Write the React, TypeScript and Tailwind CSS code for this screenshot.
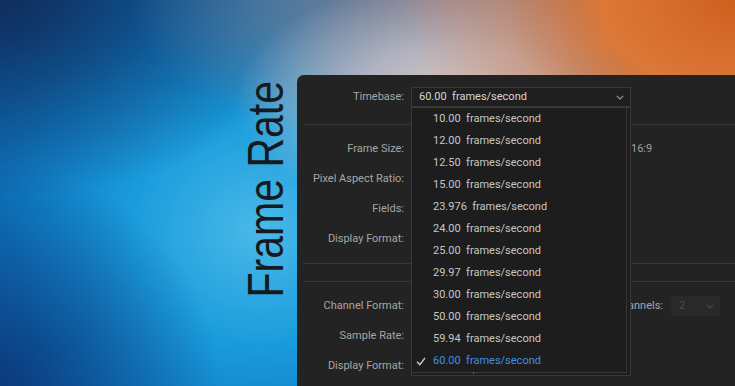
import React from "react";

const rates = [
  "10.00",
  "12.00",
  "12.50",
  "15.00",
  "23.976",
  "24.00",
  "25.00",
  "29.97",
  "30.00",
  "50.00",
  "59.94",
  "60.00",
];

function Chevron({ color = "#9a9a9a" }: { color?: string }) {
  return (
    <svg width="8" height="5" viewBox="0 0 8 5" fill="none">
      <path d="M0.8 0.8 L4 4 L7.2 0.8" stroke={color} strokeWidth="1.1" />
    </svg>
  );
}

function Row({ label, children, h = "h-[30px]" }: { label: string; children?: React.ReactNode; h?: string }) {
  return (
    <div className={`flex items-center ${h}`}>
      <div className="w-[107px] text-right text-[#a6a6a6] whitespace-nowrap">{label}</div>
      <div className="ml-[7px] flex items-center">{children}</div>
    </div>
  );
}

function Divider() {
  return <div className="ml-[6px] h-px bg-[#383838]" />;
}

export default function App() {
  return (
    <div className="relative flex w-[735px] h-[386px] overflow-hidden bg-[#0f3a74] bg-[image:radial-gradient(ellipse_330px_230px_at_100%_0%,#cf601f_0%,#dc7838_40%,rgba(222,140,95,0.5)_70%,rgba(222,150,120,0)_100%),radial-gradient(ellipse_220px_120px_at_455px_100px,#dccac2_0%,rgba(200,192,200,0.8)_45%,rgba(180,180,195,0)_100%),radial-gradient(ellipse_320px_150px_at_450px_0px,rgba(145,128,134,0.95)_0%,rgba(140,128,136,0.5)_55%,rgba(140,128,136,0)_100%),radial-gradient(ellipse_320px_200px_at_0px_0px,rgba(16,44,90,0.95)_0%,rgba(16,44,90,0.4)_55%,rgba(16,44,90,0)_100%),radial-gradient(ellipse_220px_220px_at_0px_100%,rgba(12,54,120,0.9)_0%,rgba(12,54,120,0)_100%),radial-gradient(ellipse_430px_380px_at_260px_230px,#4ab9e8_0%,#1a9cdc_30%,#0f7cc4_55%,#0c5aa2_80%,#10305e_100%)]">
      <div className="w-[297px] shrink-0 flex justify-end items-start pt-[81px] pr-[10px]">
        <div className="[writing-mode:vertical-rl] rotate-180 scale-x-[1.2] font-['Liberation_Sans',Arial,sans-serif] text-[41px] leading-none text-[#16191d] whitespace-nowrap">
          Frame Rate
        </div>
      </div>

      <div className="relative flex-1 mt-[75px] rounded-tl-[7px] bg-[#232323] font-['Roboto',sans-serif] text-[11px]">
        <div className="pt-[12px]">
          <Row label="Timebase:" h="h-[20px]">
            <div className="w-[220px] h-[20px] border border-[#383838] bg-[#1f1f1f] flex items-center justify-between pl-[7px] pr-[6px]">
              <span className="text-[#d6d6d6] whitespace-pre">60.00  frames/second</span>
              <Chevron />
            </div>
          </Row>
        </div>
        <div className="mt-[17px]">
          <Divider />
        </div>
        <div className="pt-[9px] pb-[9px]">
          <Row label="Frame Size:">
            <div className="w-[220px]" />
            <span className="text-[#a0a0a0]">16:9</span>
          </Row>
          <Row label="Pixel Aspect Ratio:" />
          <Row label="Fields:" />
          <Row label="Display Format:" />
        </div>
        <Divider />
        <div className="h-[17px]" />
        <Divider />
        <div className="pt-[9px]">
          <Row label="Channel Format:">
            <div className="w-[252px] flex justify-end text-[#a6a6a6]">Channels:</div>
            <div className="ml-[8px] w-[49px] h-[20px] bg-[#292929] flex items-center justify-between pl-[8px] pr-[6px]">
              <span className="text-[#4a4a4a]">2</span>
              <Chevron color="#4a4a4a" />
            </div>
          </Row>
          <Row label="Sample Rate:" />
          <Row label="Display Format:" />
        </div>

        <div className="absolute left-[114px] top-[32px] w-[220px] h-[269px] border border-[#383838] bg-[#1e1e1e]">
          <div className="w-[215px] border-r border-b border-[#363636] bg-[#1d1d1d]">
            {rates.map((r) => {
              const sel = r === "60.00";
              return (
                <div key={r} className="relative h-[22px] flex items-center pl-[21px]">
                  {sel && (
                    <svg className="absolute left-[4px] top-[7px]" width="10" height="9" viewBox="0 0 10 9" fill="none">
                      <path d="M1 4.8 L3.8 7.6 L9 1" stroke="#c8c8c8" strokeWidth="1.4" />
                    </svg>
                  )}
                  <span className={`whitespace-pre ${sel ? "text-[#3d8fe3]" : "text-[#c6c6c6]"}`}>
                    {r}  frames/second
                  </span>
                </div>
              );
            })}
          </div>
          <div className="absolute left-[61px] top-[264px] w-px h-[2px] bg-[#6a6a6a]" />
        </div>
      </div>
    </div>
  );
}
